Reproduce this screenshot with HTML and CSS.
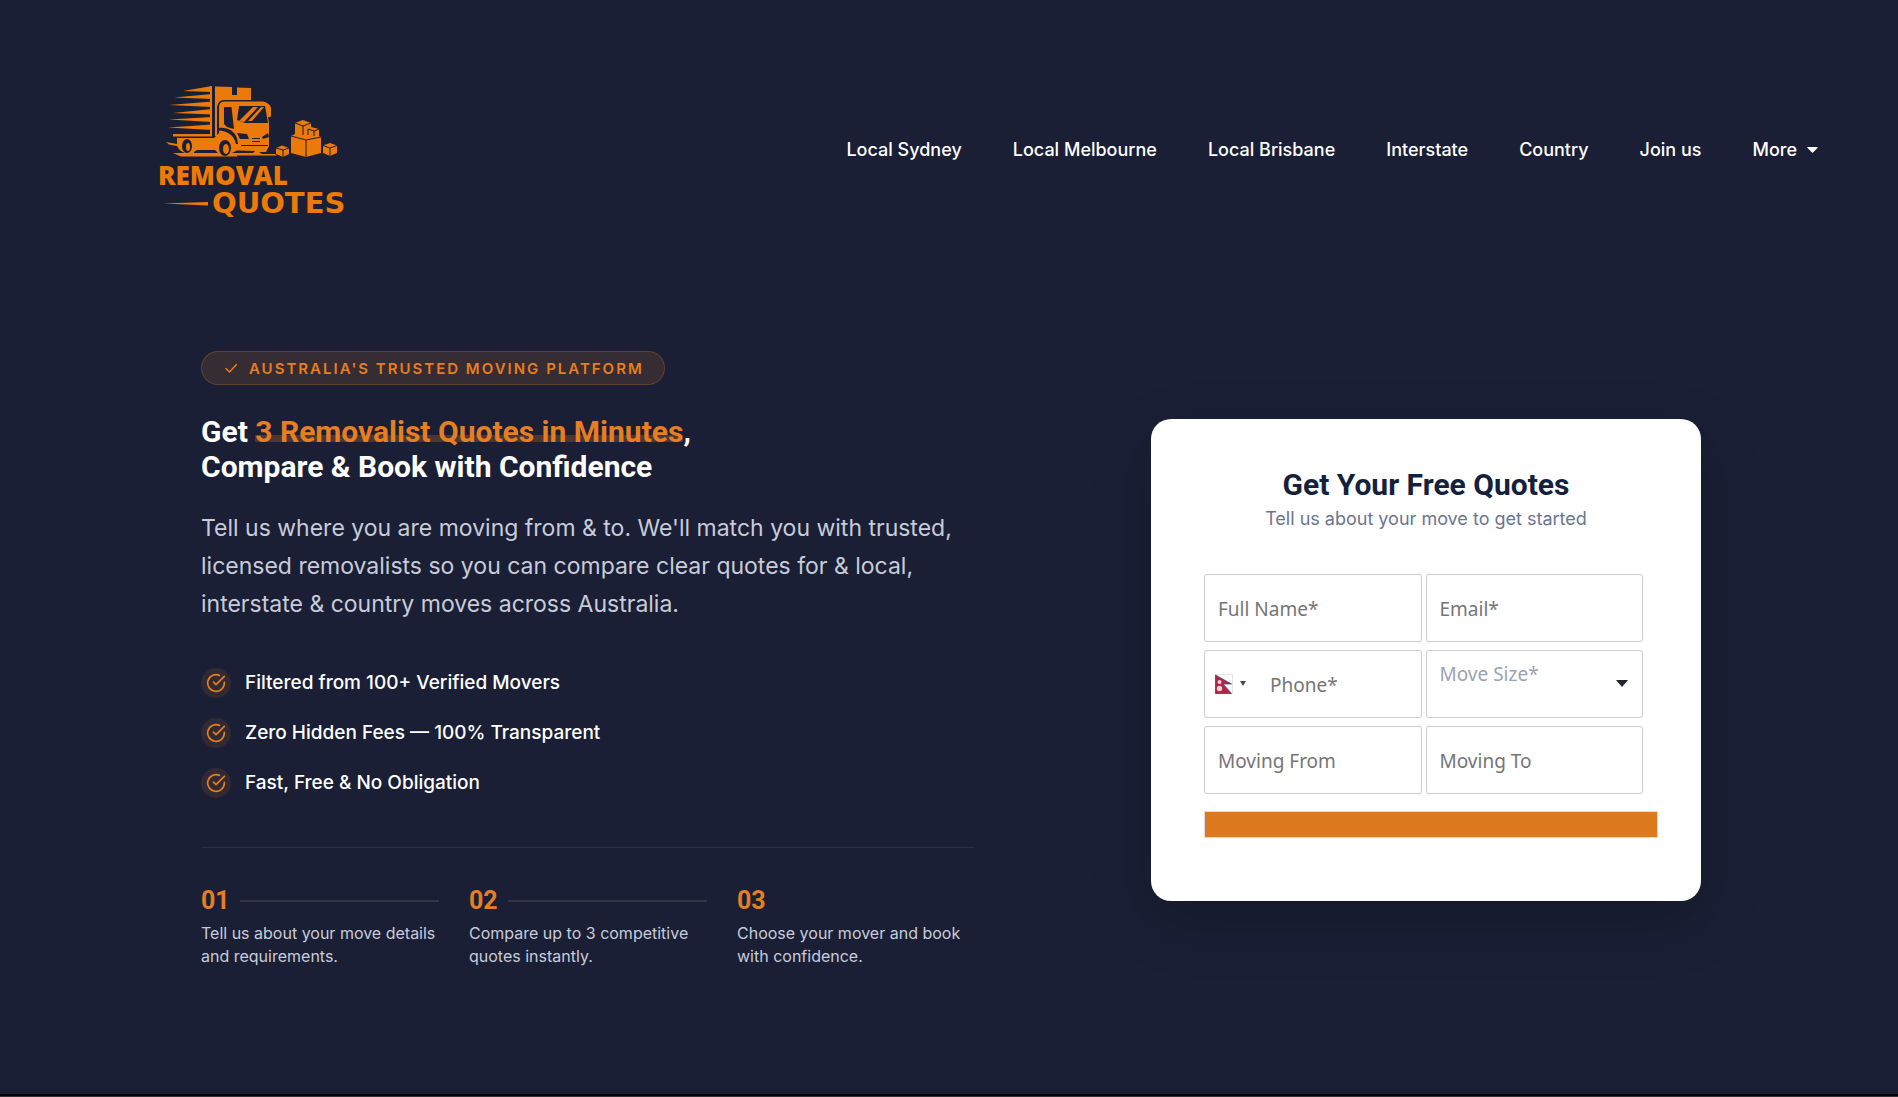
FILE: index.html
```html
<!DOCTYPE html>
<html lang="en">
<head>
<meta charset="utf-8">
<meta name="viewport" content="width=device-width, initial-scale=1">
<title>Removal Quotes</title>
<link rel="stylesheet" href="styles.css">
</head>
<body>
<header class="header">
  <a class="logo" href="#" aria-label="Removal Quotes">
    <svg class="logo-svg" viewBox="150 82 200 138" width="200" height="138" aria-hidden="true">
      <g fill="#ec7a08">
        <!-- speed lines and cargo box -->
        <path d="M182 92L211 87V93ZM173 98.500L211 95V100ZM168 106L211 102.500V108ZM172 114L211 110V115.500ZM168 120.500L211 118V123ZM167 128.500L211 125.500V131ZM172 135H211V137.500H172Z"/>
        <path d="M205 89L211 87V137H209V91Z"/>
        <path d="M214 87.500L231 88V96H236V88.500L250 89V101H222Q217 102 216 108V137H214Z"/>
        <!-- cab and chassis -->
        <path d="M176 139H213L218 134V108Q218 103 223 102.500H262Q269 104 270 109V117Q269 119 267 118L268 124V147L265 153H258L261 155H274L276 156.500H236V157.500H180L172 154H184Q178 152 176 147Z"/>
        <path d="M165 143L176 145 176 147 168 145.500Z"/>
        <!-- parcels -->
        <path d="M294 124L302 121 310 124V128L318 130V137L320 138V154L305 158 290 154V137L294 135Z"/>
        <path d="M275 149L281 146.500 288 149V155L282 158 275 155Z"/>
        <path d="M322 146.500L329 144 336 146.500V154L329 157 322 154Z"/>
      </g>
      <g fill="#1a1f36">
        <path d="M223 108H230.500L233 130L226 128 223 125Z"/>
        <path d="M238 107H264L267 124H244L236 121Z"/>
        <path d="M236 134L246 135 248 140H239Z"/>
        <path d="M261 138L267 134 268 138 262 140Z"/>
        <path d="M217 129Q231 127 236 139L237 145H235Q232 132 217 131.500Z"/>
        <ellipse cx="186" cy="147" rx="5" ry="7"/>
        <ellipse cx="224" cy="149" rx="6" ry="8"/>
        <path d="M193 153L196 151H214L217 154H193ZM240 146H267V147H240ZM251 139H259V140H251ZM251 142H259V143H251ZM231 154L236 151.500 254 152 252 154Z"/>
      </g>
      <g fill="#ec7a08">
        <path d="M238 122L252 108H257L243 123ZM247 122L260 108H263L251 122Z"/>
        <ellipse cx="187" cy="148" rx="2" ry="4"/>
        <ellipse cx="225" cy="150" rx="3" ry="5"/>
      </g>
      <g fill="none" stroke="#1a1f36" stroke-width="1">
        <path d="M294 124L302 127 310 124M302 127V136M290 137L305 141 320 138M305 141V158M307 130L313 132 318 130M313 132V137M307 130V136M275 149L282 151 288 149M282 151V158M322 146.500L329 149 336 146.500M329 149V157"/>
      </g>
      <path fill="#ec7a08" d="M162 204.500L207 203V206.500Z"/>
      <text class="logo-top" x="157" y="186">REMOVAL</text>
      <text class="logo-bottom" x="211" y="214">QUOTES</text>
    </svg>
  </a>
  <nav class="nav" aria-label="Main">
    <a href="#">Local Sydney</a>
    <a href="#">Local Melbourne</a>
    <a href="#">Local Brisbane</a>
    <a href="#">Interstate</a>
    <a href="#">Country</a>
    <a href="#">Join us</a>
    <a class="nav-more" href="#">More
      <svg width="11" height="6" viewBox="0 0 11 6" aria-hidden="true"><path d="M0.500 0H10.500Q11 0.500 10.500 1L6 5.500Q5.500 6 5 5.500L0.500 1Q0 0.500 0.500 0Z" fill="#fff"/></svg>
    </a>
  </nav>
</header>

<main class="hero">
  <section class="intro">
    <p class="badge">
      <svg width="12" height="10" viewBox="0 0 12 10" aria-hidden="true"><path d="M1 5.500L4.500 9 11.500 1.500" fill="none" stroke="#e67e22" stroke-width="1.500" stroke-linecap="round" stroke-linejoin="round"/></svg>
      AUSTRALIA'S TRUSTED MOVING PLATFORM
    </p>
    <h1 class="title">Get <span class="mark">3 Removalist Quotes in Minutes</span>,<br>Compare &amp; Book with Confidence</h1>
    <p class="lead">Tell us where you are moving from &amp; to. We'll match you with trusted,<br>licensed removalists so you can compare clear quotes for &amp; local,<br>interstate &amp; country moves across Australia.</p>
    <ul class="benefits">
      <li><span class="tick"><svg width="20" height="20" viewBox="0 0 24 24" aria-hidden="true"><path d="M22 11.080V12a10 10 0 1 1-5.930-9.140M22 4L12 14.010l-3-3"/></svg></span>Filtered from 100+ Verified Movers</li>
      <li><span class="tick"><svg width="20" height="20" viewBox="0 0 24 24" aria-hidden="true"><path d="M22 11.080V12a10 10 0 1 1-5.930-9.140M22 4L12 14.010l-3-3"/></svg></span>Zero Hidden Fees — 100% Transparent</li>
      <li><span class="tick"><svg width="20" height="20" viewBox="0 0 24 24" aria-hidden="true"><path d="M22 11.080V12a10 10 0 1 1-5.930-9.140M22 4L12 14.010l-3-3"/></svg></span>Fast, Free &amp; No Obligation</li>
    </ul>
    <ol class="steps">
      <li><span class="step-number">01</span>Tell us about your move details and requirements.</li>
      <li><span class="step-number">02</span>Compare up to 3 competitive quotes instantly.</li>
      <li><span class="step-number">03</span>Choose your mover and book with confidence.</li>
    </ol>
  </section>

  <section class="card">
    <h2 class="card-title">Get Your Free Quotes</h2>
    <p class="card-text">Tell us about your move to get started</p>
    <form class="form">
      <div class="fields">
        <input class="field" type="text" aria-label="Full Name" placeholder="Full Name*">
        <input class="field" type="email" aria-label="Email" placeholder="Email*">
        <div class="field phone">
          <button class="country" type="button" aria-label="Country code: Nepal">
            <svg width="18" height="20" viewBox="0 0 18 20" aria-hidden="true"><rect x="0.500" y="0.500" width="17" height="19" fill="#fff" stroke="#e4e6ea"/><path d="M0.500 1L16.500 10H8L16.500 19.500H0.500Z" fill="#b3224a" stroke="#3d4c78" stroke-width="0.800"/><circle cx="4.500" cy="8" r="2" fill="#f6d9c0"/><circle cx="4.500" cy="14.500" r="2.700" fill="#f6d9c0"/></svg>
            <svg width="6" height="5" viewBox="0 0 6 5" aria-hidden="true"><path d="M0 0H6L3 5Z" fill="#444a57"/></svg>
          </button>
          <input class="phone-input" type="tel" aria-label="Phone" placeholder="Phone*">
        </div>
        <select class="field select" aria-label="Move Size"><option>Move Size*</option></select>
        <input class="field" type="text" aria-label="Moving From" placeholder="Moving From">
        <input class="field" type="text" aria-label="Moving To" placeholder="Moving To">
      </div>
      <button class="submit" type="submit" aria-label="Get quotes"></button>
    </form>
  </section>
</main>
<footer class="bottom-edge"></footer>
</body>
</html>
```
FILE: styles.css
```css
* { box-sizing: border-box; }

body {
  margin: 0;
  min-height: 100vh;
  display: flex;
  flex-direction: column;
  background: #1a1f36;
  color: #fff;
  font-family: Inter, sans-serif;
}

h1, h2, p, ul, ol { margin: 0; padding: 0; }
ul, ol { list-style: none; }

.header {
  display: flex;
  justify-content: space-between;
  align-items: center;
  padding: 81px 80px 0 151px;
}

.logo-svg { display: block; overflow: visible; }
.logo-top, .logo-bottom { fill: #ec7a08; }
.logo-top { font-family: "Open Sans", sans-serif; font-size: 26px; font-weight: 800; }
.logo-bottom { font-family: "DejaVu Sans", sans-serif; font-size: 29px; font-weight: 700; }

.nav { display: flex; flex-wrap: wrap; gap: 16px 51px; }
.nav a {
  color: #fff;
  font-size: 18px;
  font-weight: 500;
  line-height: 24px;
  text-decoration: none;
}
.nav-more { display: flex; align-items: center; gap: 10px; }

.hero {
  flex: 1;
  display: grid;
  grid-template-columns: minmax(0, 1fr) 550px;
  gap: 176px;
  align-items: center;
  align-content: start;
  padding: 132px 197px 60px 201px;
}

.badge {
  display: inline-flex;
  align-items: center;
  gap: 12px;
  height: 34px;
  padding: 0 20px 0 23px;
  border: 1px solid rgba(230, 126, 34, 0.25);
  border-radius: 17px;
  background: rgba(230, 126, 34, 0.14);
  color: #e67e22;
  font-size: 15px;
  font-weight: 600;
  letter-spacing: 2px;
}

.title {
  margin-top: 29px;
  font-family: Roboto, sans-serif;
  font-size: 30px;
  font-weight: 700;
  line-height: 35px;
}
.mark {
  color: #e67e22;
  background: linear-gradient(rgba(230, 126, 34, 0.25), rgba(230, 126, 34, 0.25)) 0 21px / 100% 7px no-repeat;
}

.lead {
  margin-top: 25px;
  color: #c8ccd8;
  font-size: 23px;
  line-height: 38px;
}

.benefits { display: grid; gap: 20px; margin-top: 45px; }
.benefits li {
  display: flex;
  align-items: center;
  gap: 14px;
  font-size: 19px;
  font-weight: 500;
  line-height: 30px;
}
.tick {
  display: grid;
  place-items: center;
  width: 30px;
  height: 30px;
  border-radius: 50%;
  background: rgba(230, 126, 34, 0.12);
}
.tick path {
  fill: none;
  stroke: #e67e22;
  stroke-width: 2;
  stroke-linecap: round;
  stroke-linejoin: round;
}

.steps {
  display: grid;
  grid-template-columns: repeat(3, minmax(0, 1fr));
  gap: 30px;
  margin-top: 49px;
  padding-top: 40px;
  border-top: 1px solid rgba(255, 255, 255, 0.08);
  color: #c8ccd8;
  font-size: 16px;
  line-height: 23px;
}
.step-number {
  display: flex;
  align-items: center;
  gap: 10px;
  margin-bottom: 9px;
  color: #e67e22;
  font-family: Roboto, sans-serif;
  font-size: 25px;
  font-weight: 700;
  line-height: 25px;
}
.steps li:not(:last-child) .step-number::after {
  content: "";
  flex: 1;
  height: 2px;
  background: rgba(255, 255, 255, 0.1);
}

.card {
  padding: 48px 43px 63px 53px;
  border-radius: 20px;
  background: #fff;
  box-shadow: 0 20px 60px rgba(0, 0, 0, 0.2);
}
.card-title, .card-text { padding-right: 10px; text-align: center; }
.card-title {
  color: #14213d;
  font-family: Roboto, sans-serif;
  font-size: 30px;
  font-weight: 700;
  line-height: 36px;
}
.card-text { color: #6b7590; font-size: 18px; line-height: 32px; }

.form { margin-top: 39px; }
.fields {
  display: grid;
  grid-template-columns: repeat(2, minmax(0, 1fr));
  gap: 8px 4px;
  padding-right: 15px;
}
.field {
  width: 100%;
  height: 68px;
  padding: 2px 13px 0;
  border: 1px solid #ccc;
  border-radius: 3px;
  background: #fff;
  font-family: "Noto Sans", sans-serif;
  font-size: 19px;
}
.field::placeholder, .phone-input::placeholder { color: #757575; opacity: 1; }
.phone { display: flex; align-items: center; padding: 0 10px; }
.country {
  display: flex;
  align-items: center;
  gap: 7px;
  padding: 0;
  border: 0;
  background: none;
}
.phone-input {
  flex: 1;
  min-width: 0;
  padding: 2px 0 0 24px;
  border: 0;
  background: none;
  font: inherit;
}
.select {
  padding-bottom: 22px;
  appearance: none;
  color: #9ca3af;
  background: #fff url("data:image/svg+xml,%3Csvg xmlns='http://www.w3.org/2000/svg' viewBox='0 0 12 7'%3E%3Cpath d='M0 0H12L6 7Z' fill='%2322252e'/%3E%3C/svg%3E") right 14px center / 12px 7px no-repeat;
}
.submit {
  display: block;
  width: 100%;
  height: 27px;
  margin-top: 17px;
  padding: 0;
  border: 1px solid #ddd;
  background: #dd7a20;
}

.bottom-edge { height: 3px; background: #000; border-bottom: 1px solid #333; }

@media (max-width: 1500px) {
  .header { padding: 40px; flex-wrap: wrap; gap: 24px; }
  .hero { grid-template-columns: minmax(0, 1fr); gap: 60px; padding: 40px; }
  .card { max-width: 550px; }
}
```
